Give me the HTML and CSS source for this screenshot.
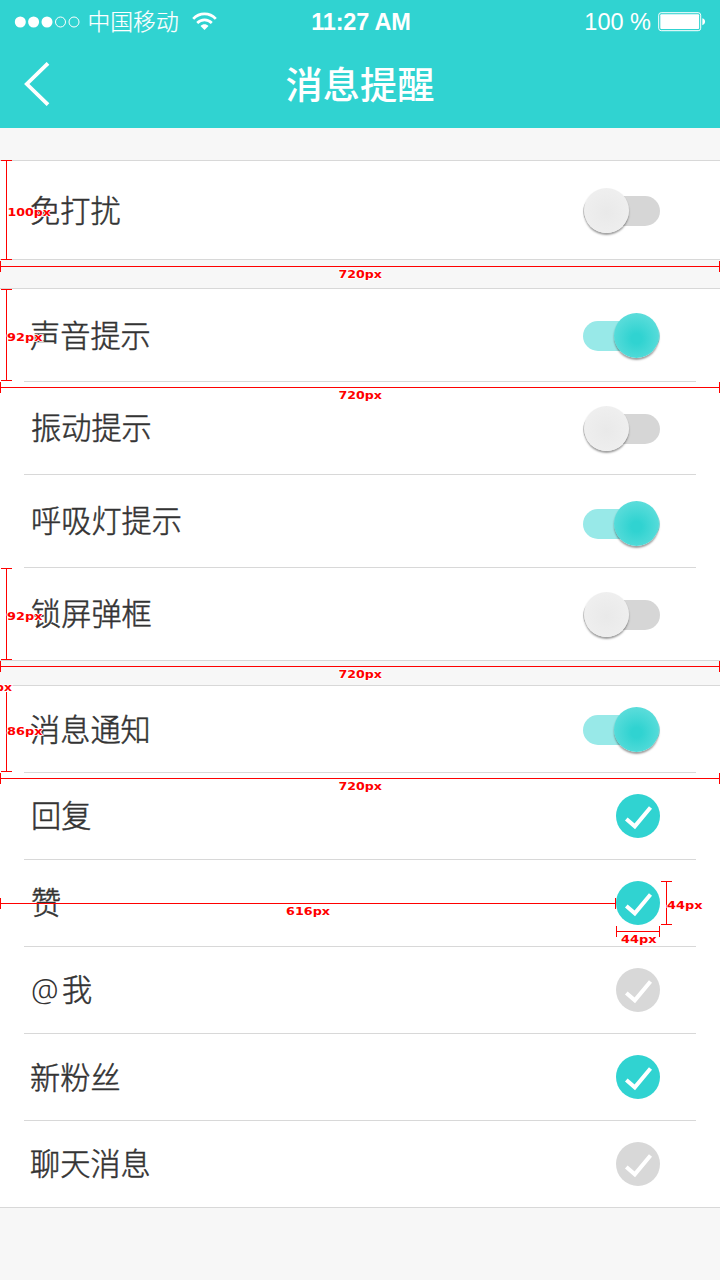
FILE: index.html
```html
<!DOCTYPE html>
<html lang="zh-CN">
<head>
<meta charset="utf-8">
<title>消息提醒</title>
<link rel="stylesheet" href="styles.css">
</head>
<body>
<div class="screen">
  <header class="header">
    <div class="status">
      <div class="status-left">
        <svg class="signal" width="66" height="12" viewBox="0 0 66 12">
          <g fill="#fff"><circle cx="6.3" cy="6" r="5.5"/><circle cx="19.6" cy="6" r="5.5"/><circle cx="33" cy="6" r="5.5"/></g>
          <g fill="none" stroke="#fff" stroke-width="1"><circle cx="46.5" cy="6" r="5"/><circle cx="60" cy="6" r="5"/></g>
        </svg>
        <span class="carrier">中国移动</span>
        <svg class="wifi" width="25" height="19" viewBox="0 0 25 19">
          <g fill="none" stroke="#fff">
            <path d="M1.2 6.8C7.4 .1 17.6 .1 23.8 6.8" stroke-width="2.7"/>
            <path d="M5.2 11C9.2 6.8 15.8 6.8 19.8 11" stroke-width="2.6"/>
          </g>
          <path d="M12.5 18L8.5 13.9C10.7 11.7 14.3 11.7 16.5 13.9Z" fill="#fff"/>
        </svg>
      </div>
      <span class="time">11:27 AM</span>
      <div class="status-right">
        <span class="percent">100 %</span>
        <svg class="battery" width="48" height="20" viewBox="0 0 48 20">
          <rect x=".7" y=".7" width="42" height="18" rx="2.5" fill="none" stroke="#fff"/>
          <rect x="2.3" y="2.3" width="38.8" height="14.8" rx="1" fill="#fff"/>
          <path d="M44.3 6.3C48 7.3 48 12.2 44.3 13.2Z" fill="#fff"/>
        </svg>
      </div>
    </div>
    <nav class="navbar">
      <svg class="back" width="26" height="44" viewBox="0 0 26 44"><path d="M24 1.3L2.8 22L24 42.7" fill="none" stroke="#fff" stroke-width="3.8"/></svg>
      <h1 class="title">消息提醒</h1>
    </nav>
  </header>

  <section class="group group-quiet">
    <div class="row"><span class="label low">免打扰</span><span class="switch"><i class="knob"></i></span></div>
  </section>

  <section class="group group-alerts">
    <div class="row"><span class="label low">声音提示</span><span class="switch on"><i class="knob"></i></span></div>
    <div class="row"><span class="label shift">振动提示</span><span class="switch"><i class="knob"></i></span></div>
    <div class="row"><span class="label shift">呼吸灯提示</span><span class="switch on low"><i class="knob"></i></span></div>
    <div class="row"><span class="label shift">锁屏弹框</span><span class="switch"><i class="knob"></i></span></div>
  </section>

  <section class="group group-notices">
    <div class="row"><span class="label low">消息通知</span><span class="switch on"><i class="knob"></i></span></div>
    <div class="row"><span class="label shift">回复</span><svg class="check on" viewBox="0 0 44 44"><circle cx="22" cy="22" r="22"/><path d="M10.3 25L18.8 32.3L34.5 13.5"/></svg></div>
    <div class="row"><span class="label shift">赞</span><svg class="check on" viewBox="0 0 44 44"><circle cx="22" cy="22" r="22"/><path d="M10.3 25L18.8 32.3L34.5 13.5"/></svg></div>
    <div class="row"><span class="label shift"><span class="at">@</span>我</span><svg class="check" viewBox="0 0 44 44"><circle cx="22" cy="22" r="22"/><path d="M10.3 25L18.8 32.3L34.5 13.5"/></svg></div>
    <div class="row"><span class="label low">新粉丝</span><svg class="check on" viewBox="0 0 44 44"><circle cx="22" cy="22" r="22"/><path d="M10.3 25L18.8 32.3L34.5 13.5"/></svg></div>
    <div class="row"><span class="label">聊天消息</span><svg class="check" viewBox="0 0 44 44"><circle cx="22" cy="22" r="22"/><path d="M10.3 25L18.8 32.3L34.5 13.5"/></svg></div>
  </section>

  <!-- Dimension lines laid over the layout -->
  <svg class="measure" width="720" height="1280" viewBox="0 0 720 1280">
    <g class="measure-line">
      <path d="M6.5 160V260M1 160.5H12M1 259.5H12"/>
      <path d="M0 266.5H720M.5 261V272M719.5 261V272"/>
      <path d="M6.5 289V381M1 289.5H12M1 380.5H12"/>
      <path d="M0 387.5H720M.5 382V393M719.5 382V393"/>
      <path d="M6.5 568V660M1 568.5H12M1 659.5H12"/>
      <path d="M0 666.5H720M.5 661V672M719.5 661V672"/>
      <path d="M6.5 692V772M1 771.5H12"/>
      <path d="M0 778.5H720M.5 773V784M719.5 773V784"/>
      <path d="M0 903.5H616M.5 898V909M615.5 898V909"/>
      <path d="M666.5 881V925M661 881.5H672M661 924.5H672"/>
      <path d="M616 931.5H660M616.5 926V937M659.5 926V937"/>
    </g>
    <g class="measure-text">
      <text x="7.5" y="216" textLength="43.5" lengthAdjust="spacingAndGlyphs">100px</text>
      <text x="338.5" y="278" textLength="43.5" lengthAdjust="spacingAndGlyphs">720px</text>
      <text x="7" y="341" textLength="35.5" lengthAdjust="spacingAndGlyphs">92px</text>
      <text x="338.5" y="399" textLength="43.5" lengthAdjust="spacingAndGlyphs">720px</text>
      <text x="7" y="620" textLength="35.5" lengthAdjust="spacingAndGlyphs">92px</text>
      <text x="338.5" y="678" textLength="43.5" lengthAdjust="spacingAndGlyphs">720px</text>
      <text x="-5" y="691" textLength="17" lengthAdjust="spacingAndGlyphs">px</text>
      <text x="7" y="735" textLength="35.5" lengthAdjust="spacingAndGlyphs">86px</text>
      <text x="338.5" y="790" textLength="43.5" lengthAdjust="spacingAndGlyphs">720px</text>
      <text x="286" y="915" textLength="44" lengthAdjust="spacingAndGlyphs">616px</text>
      <text x="667" y="909" textLength="35.5" lengthAdjust="spacingAndGlyphs">44px</text>
      <text x="621" y="943" textLength="35.5" lengthAdjust="spacingAndGlyphs">44px</text>
    </g>
  </svg>
</div>
</body>
</html>
```

FILE: styles.css
```css
* { box-sizing: border-box; }

body {
  margin: 0;
  background: #f7f7f7;
  color: #333;
  font-family: "Liberation Sans", "Noto Sans CJK SC", sans-serif;
}

.screen {
  position: relative;
  width: 720px;
  height: 1280px;
  overflow: hidden;
  background: #f7f7f7;
}

svg { display: block; flex: none; }

.header {
  height: 128px;
  background: #30d3d1;
  color: #fff;
}

.status {
  display: grid;
  grid-template-columns: 1fr auto 1fr;
  align-items: center;
  height: 43px;
  padding: 0 14px;
}

.status-left,
.status-right {
  display: flex;
  align-items: center;
}

.status-right { justify-content: flex-end; }

.carrier {
  margin: -2px 0 0 7.5px;
  font: 300 22.8px/30px "Noto Sans CJK SC", sans-serif;
  -webkit-text-stroke: 0.2px #fff;
  white-space: nowrap;
}

.wifi { margin: 0 0 1px 13px; }

.time {
  padding-left: 2px;
  font-size: 23.5px;
  font-weight: 700;
  line-height: 43px;
  letter-spacing: -0.2px;
}

.percent {
  font-size: 23.5px;
  line-height: 44px;
  white-space: nowrap;
}

.battery { margin-left: 7px; }

.navbar {
  display: grid;
  grid-template-columns: 26px 1fr 26px;
  align-items: center;
  height: 82px;
  padding: 0 24px;
}

.title {
  margin: -2px 0 0;
  font: 500 37.2px/56px "Noto Sans CJK SC", sans-serif;
  text-align: center;
}

.group {
  background: #fff;
  border-top: 1px solid #d8d8d8;
  border-bottom: 1px solid #d8d8d8;
}

.group-quiet { margin-top: 32px; }
.group-alerts { margin-top: 28px; }
.group-notices { margin-top: 24px; }

.row {
  display: flex;
  align-items: center;
  justify-content: space-between;
  height: 92px;
  margin: 0 24px;
  padding: 0 36px 0 6px;
}

.group-quiet .row { height: 98px; }
.group-notices .row { height: 86px; }

.row + .row {
  box-sizing: content-box;
  border-top: 1px solid #d8d8d8;
}

.label {
  margin-bottom: 4px;
  font: 300 30.2px/44px "Noto Sans CJK SC", sans-serif;
  -webkit-text-stroke: 0.5px #333;
  white-space: nowrap;
}

.label.low { margin-bottom: 2px; }

.label.shift { padding-left: 1px; }

.at {
  display: inline-block;
  width: 31px;
  font: 300 31px/40px "Noto Sans", sans-serif;
  -webkit-text-stroke: 0;
}

.switch {
  display: flex;
  align-items: flex-start;
  width: 77px;
  height: 30px;
  margin-top: 2px;
  border-radius: 15px;
  background: #d6d6d6;
}

.switch.low { margin-top: 6px; }

.switch.on {
  justify-content: flex-end;
  padding-right: 1px;
  background: #98e9e8;
}

.knob {
  width: 45px;
  height: 45px;
  margin: -8px 0 0 1px;
  border-radius: 50%;
  background: radial-gradient(circle at 50% 55%, #e9e9e9, #f1f1f1);
  box-shadow: 0 2px 2px rgba(0, 0, 0, 0.38);
}

.switch.on .knob {
  background: radial-gradient(circle at 50% 57%, #30d3d1 15%, #6be0de 95%);
}

.check {
  width: 44px;
  height: 44px;
  fill: #d8d8d8;
}

.check.on { fill: #30d3d1; }

.check path {
  fill: none;
  stroke: #fff;
  stroke-width: 4;
}

.measure {
  position: absolute;
  top: 0;
  left: 0;
}

.measure-line {
  fill: none;
  stroke: #f00;
  shape-rendering: crispEdges;
}

.measure-text {
  fill: #f00;
  stroke: #fff;
  stroke-width: 1.5px;
  paint-order: stroke;
  font: 700 11px "DejaVu Sans", sans-serif;
}
```
